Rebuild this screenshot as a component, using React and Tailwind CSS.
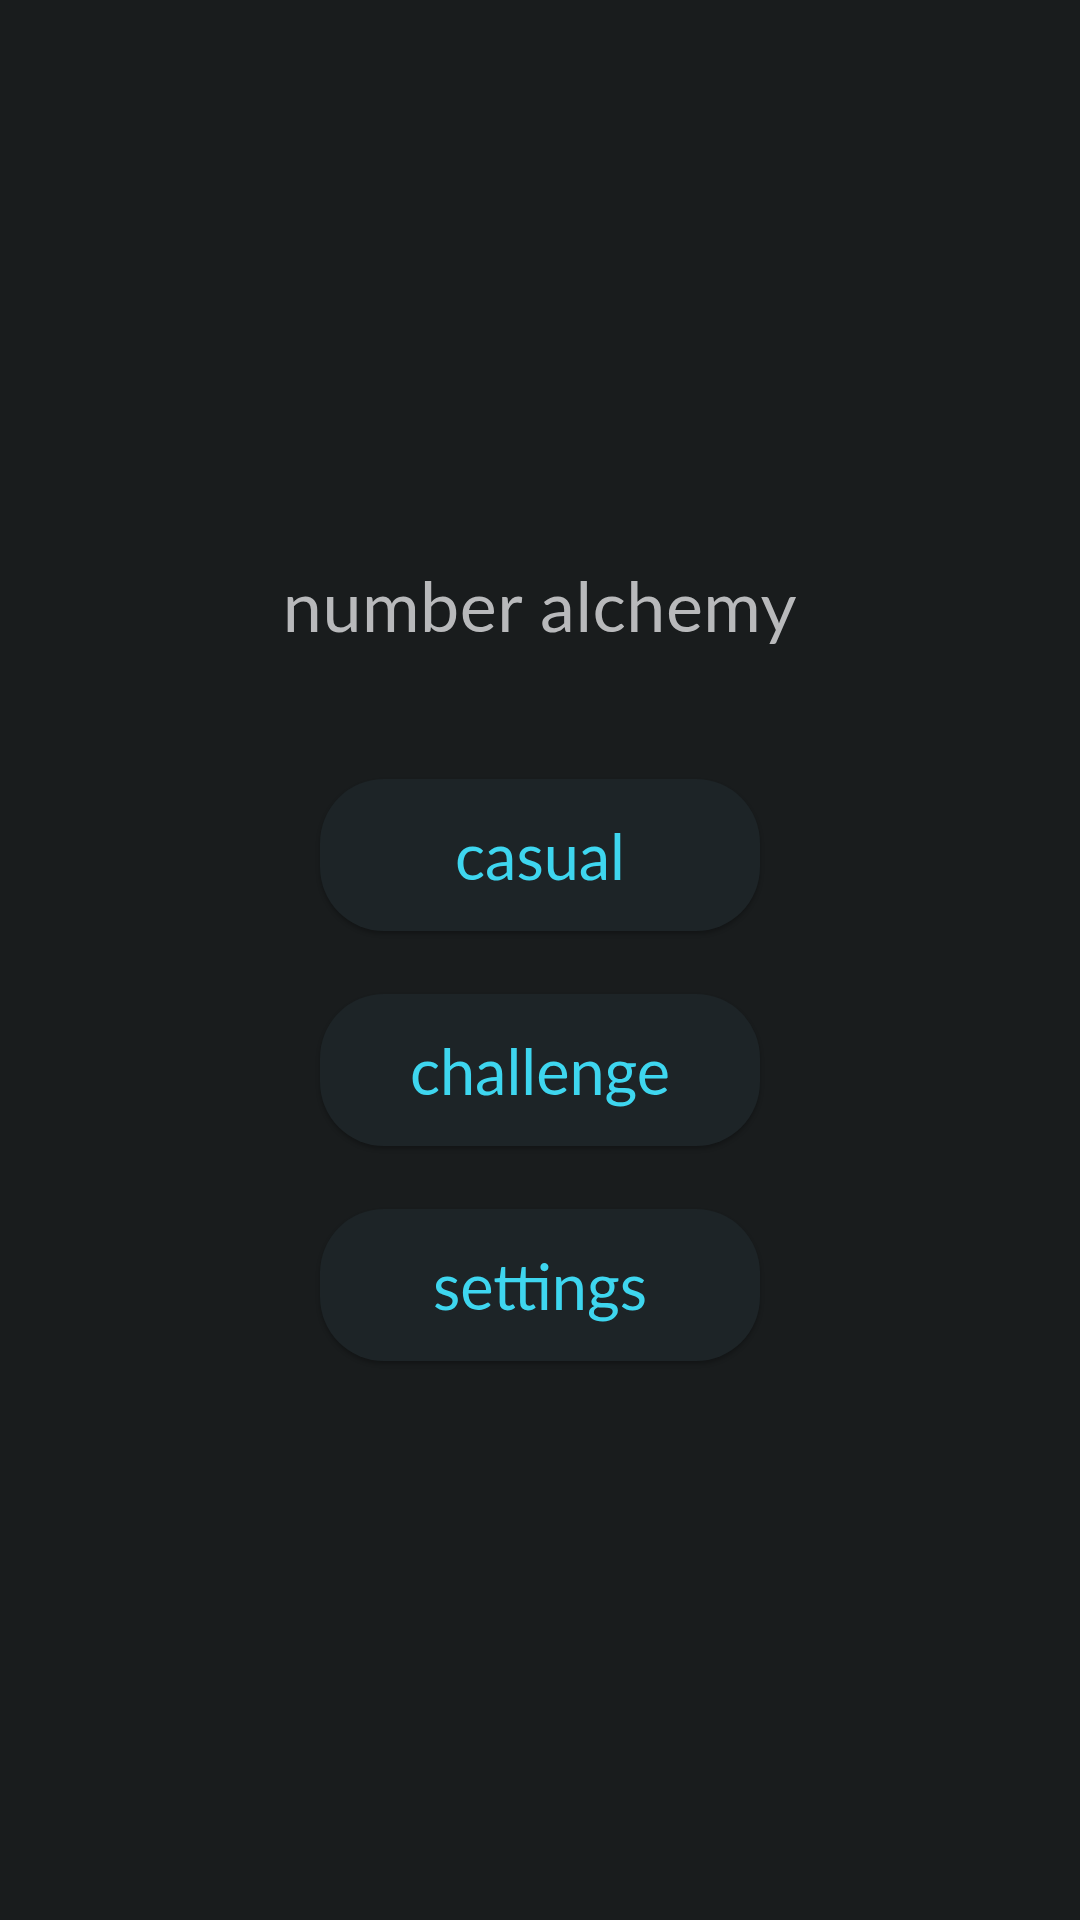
const items = ['casual', 'challenge', 'settings']

export default function App() {
  return (
    <div className="min-h-[1920px] w-full bg-[#191c1d] flex flex-col items-center font-['Lato',sans-serif]">
      <h1 className="mt-[570px] text-[70px] leading-none font-normal text-[#b8b9bb] tracking-[0.5px]">
        number alchemy
      </h1>

      <div className="mt-[139px] flex flex-col gap-[63px]">
        {items.map((label) => (
          <button
            key={label}
            className="w-[440px] h-[152px] rounded-[64px] bg-[#1d2427] shadow-[0_3px_4px_rgba(0,0,0,0.25)] flex items-center justify-center text-[63px] leading-none text-[#3ed6ef]"
          >
            {label}
          </button>
        ))}
      </div>
    </div>
  )
}
